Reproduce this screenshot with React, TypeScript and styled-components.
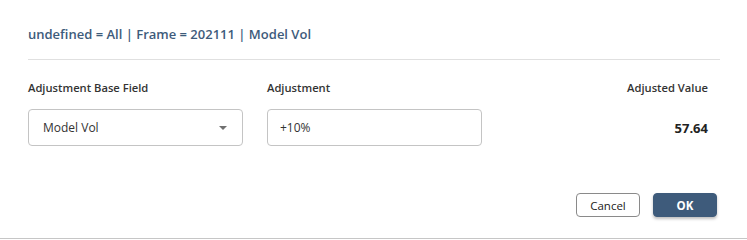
import { createGlobalStyle, styled } from 'styled-components';

const GlobalStyle = createGlobalStyle`
  html, body {
    margin: 0;
    padding: 0;
    background: #ffffff;
  }

  body {
    font-family: 'Open Sans', 'Noto Sans', sans-serif;
    color: #222222;
  }
`;

const App = () => {
  return (
    <>
      <GlobalStyle />
      <Dialog>
        <Header>
          <Title>undefined = All | Frame = 202111 | Model Vol</Title>
        </Header>
        <Body>
          <FieldGrid>
            <Field>
              <Label>Adjustment Base Field</Label>
              <SelectBox>
                <span>Model Vol</span>
                <Caret />
              </SelectBox>
            </Field>
            <Field>
              <Label>Adjustment</Label>
              <TextInput defaultValue='+10%' />
            </Field>
            <ValueField>
              <Label>Adjusted Value</Label>
              <Value>57.64</Value>
            </ValueField>
          </FieldGrid>
          <Footer>
            <Button>Cancel</Button>
            <Button $primary>OK</Button>
          </Footer>
        </Body>
      </Dialog>
    </>
  );
};

export default App;

const Dialog = styled.div`
  width: 747px;
  height: 239px;
  border-bottom: 1px solid #c6c6c6;
  box-sizing: border-box;
`;

const Header = styled.div`
  margin: 0 27px 0 28px;
  padding-top: 24px;
  height: 35px;
  border-bottom: 1px solid #e0e0e0;
`;

const Title = styled.div`
  font-size: 13px;
  font-weight: 600;
  line-height: 20px;
  color: #3e5b7b;
`;

const Body = styled.div`
  padding: 0 30px 0 28px;
`;

const FieldGrid = styled.div`
  display: grid;
  grid-template-columns: 215px 215px 1fr;
  column-gap: 24px;
  padding-top: 19px;
`;

const Field = styled.div`
  display: flex;
  flex-direction: column;
  gap: 12px;
`;

const ValueField = styled(Field)`
  align-items: flex-end;
  padding-right: 9px;
  gap: 22px;
`;

const Label = styled.div`
  font-size: 11.2px;
  font-weight: 600;
  line-height: 18px;
  color: #333333;
`;

const SelectBox = styled.div`
  display: flex;
  align-items: center;
  justify-content: space-between;
  height: 37px;
  padding: 0 14px 0 14px;
  border: 1px solid #c4c4c4;
  border-radius: 4px;
  box-sizing: border-box;
  font-size: 12px;
  color: #333333;
`;

const Caret = styled.span`
  width: 0;
  height: 0;
  margin-right: 1px;
  border-left: 4px solid transparent;
  border-right: 4px solid transparent;
  border-top: 4px solid #707070;
`;

const TextInput = styled.input`
  height: 37px;
  padding: 0 12px;
  border: 1px solid #c4c4c4;
  border-radius: 4px;
  box-sizing: border-box;
  font-family: inherit;
  font-size: 12px;
  color: #333333;
  outline: none;
`;

const Value = styled.div`
  font-size: 13px;
  font-weight: 700;
  line-height: 18px;
  color: #222222;
`;

const Footer = styled.div`
  display: flex;
  justify-content: flex-end;
  gap: 13px;
  padding-top: 47px;
`;

const Button = styled.button<{ $primary?: boolean }>`
  width: 64px;
  height: 24px;
  border-radius: 4px;
  box-sizing: border-box;
  font-family: inherit;
  font-size: 11.5px;
  font-weight: ${({ $primary }) => ($primary ? 700 : 400)};
  color: ${({ $primary }) => ($primary ? '#ffffff' : '#222222')};
  background: ${({ $primary }) => ($primary ? '#3e5b7b' : '#ffffff')};
  border: 1px solid ${({ $primary }) => ($primary ? '#3e5b7b' : '#8a8a8a')};
  box-shadow: ${({ $primary }) =>
    $primary ? '0 2px 3px rgba(0, 0, 0, 0.25)' : 'none'};
  cursor: pointer;
`;
